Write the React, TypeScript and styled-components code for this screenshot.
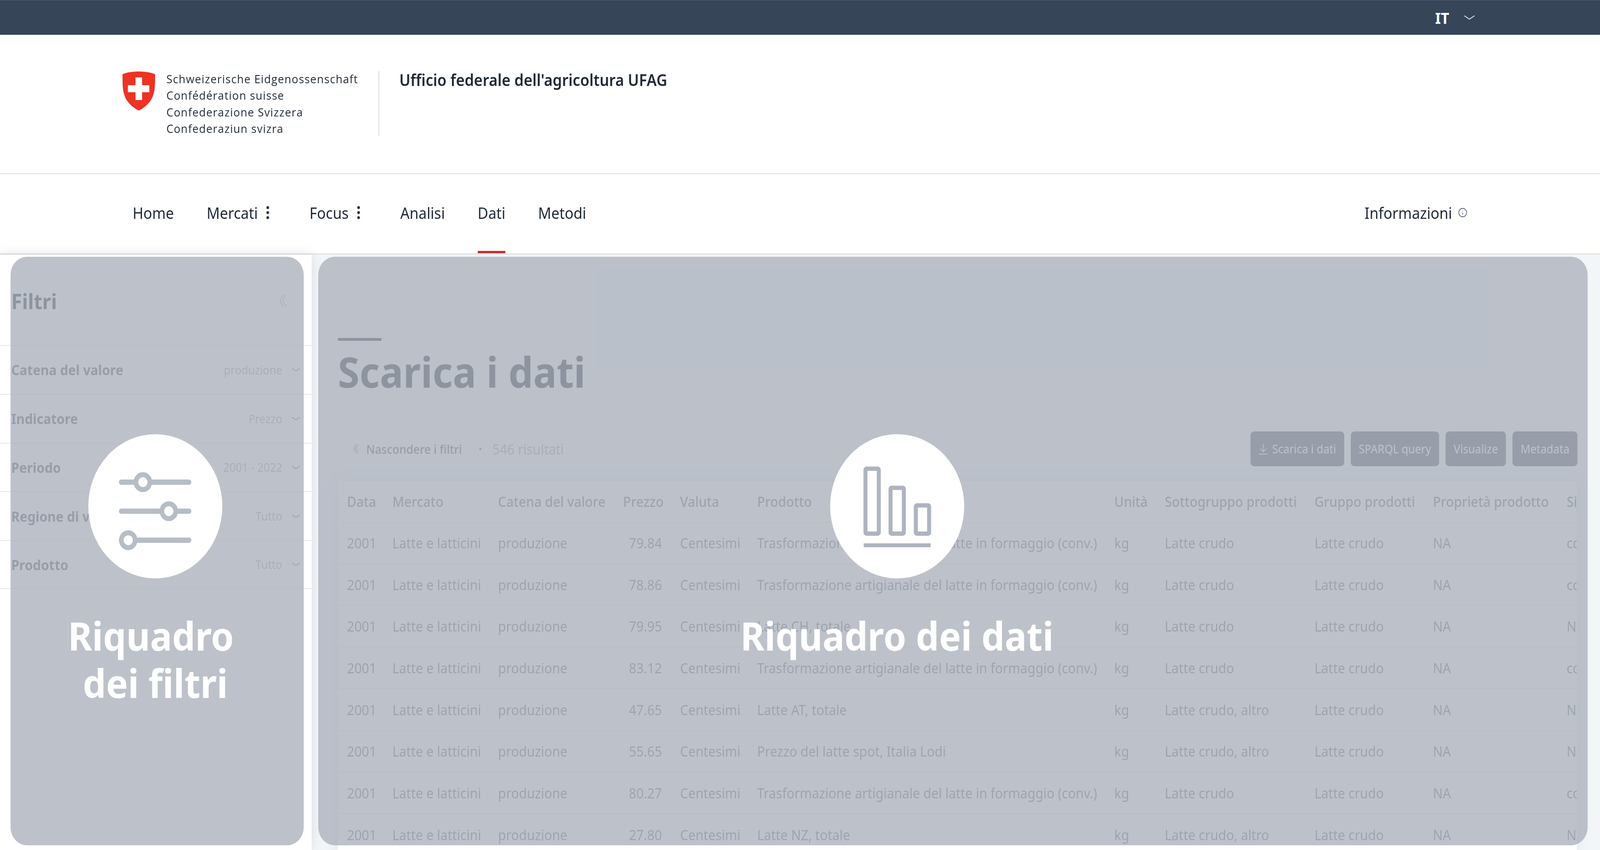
import styled, { createGlobalStyle } from "styled-components";
import { Info, EllipsisVertical } from "lucide-react";

const PAGE_WIDTH = 4404;

const GlobalStyle = createGlobalStyle`
    html, body {
        margin: 0;
        padding: 0;
        background: #fff;
    }
    body {
        font-family: "Noto Sans", sans-serif;
        color: #1f2937;
        overflow: hidden;
    }
`;

const Page = styled.div`
    position: relative;
    width: ${PAGE_WIDTH}px;
    height: 2175px;
    overflow: hidden;
    display: flex;
    flex-direction: column;
    transform-origin: 0 0;
`;

const TopBar = styled.div`
    flex: none;
    height: 89px;
    background: #364558;
    border-top: 1px solid #55657a;
    box-sizing: border-box;
    display: flex;
    align-items: center;
    justify-content: flex-end;
    padding-right: 344px;
    gap: 40px;
`;

const Lang = styled.span`
    color: #fff;
    font-size: 40px;
    font-weight: 700;
`;

const Header = styled.header`
    flex: none;
    height: 357px;
    box-sizing: border-box;
    border-bottom: 3px solid #e5e7eb;
    padding: 93px 0 0 337px;
    display: flex;
    align-items: flex-start;
`;

const Logo = styled.div`
    display: flex;
    align-items: flex-start;
    width: 707px;
    height: 166px;
    box-sizing: border-box;
    border-right: 2px solid #d1d5db;
`;

const Shield = styled.svg`
    flex: none;
    width: 90px;
    height: 101px;
    margin-top: 1px;
`;

const LogoLines = styled.div`
    margin-left: 31px;
    margin-top: -1px;
    font-family: "Open Sans", sans-serif;
    font-size: 30px;
    line-height: 42.3px;
    letter-spacing: 1.5px;
    color: #1f2937;
    white-space: nowrap;
`;

const Office = styled.div`
    margin-left: 55px;
    margin-top: -3px;
    font-size: 41px;
    line-height: 50px;
    font-weight: 600;
    color: #1f2937;
`;

const Nav = styled.nav`
    flex: none;
    height: 206px;
    box-sizing: border-box;
    border-bottom: 4px solid #e5e7eb;
    padding: 0 365px 0 365px;
    display: flex;
    align-items: stretch;
    gap: 90px;
`;

const NavItem = styled.a<{ $active?: boolean }>`
    display: flex;
    align-items: center;
    font-size: 40px;
    color: #1f2937;
    border-bottom: 6px solid ${(p) => (p.$active ? "#c53030" : "transparent")};
    svg {
        margin: 0 3px 0 5px;
    }
`;

const NavRight = styled(NavItem)`
    margin-left: auto;
    gap: 16px;
    svg {
        margin: 0;
    }
`;

const Body = styled.div`
    flex: 1;
    min-height: 0;
    display: flex;
    background: #f3f6f9;
`;

const FilterPanel = styled.aside`
    flex: none;
    width: 858px;
    background: #fff;
    box-shadow: 0 0 30px rgba(31, 41, 55, 0.12);
    position: relative;
    z-index: 1;
`;

const FilterHead = styled.div`
    height: 231px;
    box-sizing: border-box;
    padding: 4px 70px 0 31px;
    display: flex;
    align-items: center;
    justify-content: space-between;
`;

const FilterTitle = styled.h2`
    margin: 0;
    font-size: 54px;
    font-weight: 700;
`;

const FilterRow = styled.div`
    height: 124.8px;
    box-sizing: border-box;
    border-top: 2px solid #e5e7eb;
    padding: 0 32px 0 31px;
    display: flex;
    align-items: center;
    &:last-child {
        border-bottom: 2px solid #e5e7eb;
    }
`;

const FilterLabel = styled.span`
    font-size: 35.5px;
    font-weight: 700;
    color: #4b5563;
`;

const FilterValue = styled.span`
    margin-left: auto;
    margin-right: 26px;
    font-size: 30px;
    color: #9ca3af;
`;

const Main = styled.main`
    flex: 1;
    min-width: 0;
    padding: 213px 64px 0 72px;
`;

const TitleBar = styled.div`
    width: 120px;
    height: 7px;
    background: #1f2937;
`;

const Title = styled.h1`
    margin: 14px 0 0;
    font-size: 108px;
    line-height: 130px;
    font-weight: 700;
`;

const Toolbar = styled.div`
    margin-top: 88px;
    height: 89px;
    padding-left: 41px;
    display: flex;
    align-items: center;
`;

const HideFilters = styled.span`
    margin-left: 20px;
    font-size: 31px;
    font-weight: 500;
    color: #4b5563;
`;

const Dot = styled.span`
    width: 6px;
    height: 6px;
    margin: 0 30px 0 48px;
    border-radius: 50%;
    background: #6b7280;
`;

const Results = styled.span`
    font-size: 35.5px;
    color: #9ca3af;
`;

const Actions = styled.div`
    margin-left: auto;
    margin-right: -2px;
    display: flex;
    gap: 18px;
`;

const ActionButton = styled.button`
    height: 89px;
    padding: 0 22px;
    border: none;
    border-radius: 10px;
    background: #4b5563;
    color: #fff;
    font-family: inherit;
    font-size: 30px;
    display: flex;
    align-items: center;
    gap: 12px;
`;

const TableWrap = styled.div`
    margin-top: 38px;
    background: #fff;
    overflow: hidden;
    box-shadow: 0 0 40px rgba(31, 41, 55, 0.08);
`;

const Table = styled.table`
    table-layout: fixed;
    border-collapse: collapse;
    width: 3410px;
    white-space: nowrap;
    font-size: 35.6px;
    color: #6b7280;
`;

const Th = styled.th<{ $w: number; $right?: boolean }>`
    width: ${(p) => p.$w}px;
    height: 105px;
    box-sizing: border-box;
    padding: ${(p) => (p.$right ? "0 25px" : "0 0 0 25px")};
    font-weight: 500;
    overflow: hidden;
    text-align: ${(p) => (p.$right ? "right" : "left")};
`;

const Tr = styled.tr`
    border-top: 2px solid #e5e7eb;
`;

const Td = styled.td<{ $right?: boolean }>`
    height: 106.6px;
    box-sizing: border-box;
    padding: ${(p) => (p.$right ? "0 25px" : "0 0 0 25px")};
    text-align: ${(p) => (p.$right ? "right" : "left")};
    overflow: hidden;
`;

const Overlay = styled.div<{ $left: number; $width: number; $pad: number }>`
    position: absolute;
    top: 657px;
    left: ${(p) => p.$left}px;
    width: ${(p) => p.$width}px;
    height: 1506px;
    border-radius: 46px;
    background: rgba(171, 178, 188, 0.79);
    display: flex;
    flex-direction: column;
    align-items: center;
    padding: 454px ${(p) => p.$pad}px 0 0;
    box-sizing: border-box;
    z-index: 2;
`;

const Circle = styled.div`
    width: 369px;
    height: 369px;
    flex: none;
    border-radius: 50%;
    background: #fff;
    svg {
        display: block;
    }
`;

const OverlayLabel = styled.div`
    margin-top: 86px;
    color: #fff;
    font-size: 101px;
    line-height: 121px;
    font-weight: 700;
    text-align: center;
`;

const LabelLine = styled.span`
    display: block;
    padding-right: 24px;
`;

const Chevron = ({ w = 23, color = "#9ca3af" }: { w?: number; color?: string }) => (
    <svg width={w} height={w * 0.45} viewBox="0 0 23 10" fill="none" stroke={color} strokeWidth="1.8" style={{ flex: "none" }}>
        <path d="M1 1.5 L11.5 8 L22 1.5" />
    </svg>
);

const DoubleChevron = ({ w = 20, h = 33, color = "#9ca3af" }: { w?: number; h?: number; color?: string }) => (
    <svg width={w} height={h} viewBox="0 0 20 33" fill="none" stroke={color} strokeWidth="1.8" style={{ flex: "none" }}>
        <path d="M11 1 L2 16.5 L11 32" />
        <path d="M19 1 L10 16.5 L19 32" />
    </svg>
);

const DownloadIcon = () => (
    <svg width="26" height="28" viewBox="0 0 26 28" fill="none" stroke="#fff" strokeWidth="1.8">
        <path d="M13 1 V20 M5 13 L13 21 L21 13 M1 27 H25" />
    </svg>
);

const SwissShield = () => (
    <Shield viewBox="0 0 90 101">
        <path
            fill="#ed3324"
            d="M45 0 C62 0 78 2 90 7 C90 32 90 50 82 67 C75 81 60 93 45 100 C30 93 15 81 8 67 C0 50 0 32 0 7 C12 2 28 0 45 0 Z"
        />
        <path fill="#fff" d="M36 15 H54 V35 H74 V53 H54 V73 H36 V53 H15 V35 H36 Z" />
    </Shield>
);

const SlidersIcon = () => (
    <svg width="369" height="369" viewBox="0 0 369 369" fill="#fff" stroke="#b6bdc6" strokeLinecap="round">
        <path strokeWidth="13.5" d="M91 122.7 H277 M91 197 H277 M91 271.3 H277" />
        <circle cx="150.3" cy="122.7" r="19" strokeWidth="12.7" />
        <circle cx="221.7" cy="197" r="19" strokeWidth="12.7" />
        <circle cx="110" cy="271.3" r="19" strokeWidth="12.7" />
    </svg>
);

const BarsIcon = () => (
    <svg width="369" height="369" viewBox="0 0 369 369" fill="none" stroke="#aeb5bf" strokeWidth="11">
        <rect x="97.2" y="88.2" width="36.6" height="166.3" rx="3" />
        <rect x="166.2" y="137.2" width="36.6" height="117.3" rx="3" />
        <rect x="235.8" y="182.2" width="36.6" height="72.3" rx="3" />
        <rect x="92.3" y="279.3" width="184.4" height="10" fill="#aeb5bf" stroke="none" />
    </svg>
);

const columns = [
    { title: "Data", w: 125 },
    { title: "Mercato", w: 291 },
    { title: "Catena del valore", w: 344 },
    { title: "Prezzo", w: 157, right: true },
    { title: "Valuta", w: 212 },
    { title: "Prodotto", w: 983 },
    { title: "Unità", w: 139 },
    { title: "Sottogruppo prodotti", w: 412 },
    { title: "Gruppo prodotti", w: 326 },
    { title: "Proprietà prodotto", w: 368 },
    { title: "Si", w: 53 },
];

const TRASF = "Trasformazione artigianale del latte in formaggio (conv.)";

const rows = [
    ["79.84", TRASF, "Latte crudo", "cc"],
    ["78.86", TRASF, "Latte crudo", "cc"],
    ["79.95", "Latte CH, totale", "Latte crudo", "NA"],
    ["83.12", TRASF, "Latte crudo", "cc"],
    ["47.65", "Latte AT, totale", "Latte crudo, altro", "NA"],
    ["55.65", "Prezzo del latte spot, Italia Lodi", "Latte crudo, altro", "NA"],
    ["80.27", TRASF, "Latte crudo", "cc"],
    ["27.80", "Latte NZ, totale", "Latte crudo, altro", "NA"],
];

const filters = [
    { label: "Catena del valore", value: "produzione" },
    { label: "Indicatore", value: "Prezzo" },
    { label: "Periodo", value: "2001 - 2022" },
    { label: "Regione di vendita", value: "Tutto" },
    { label: "Prodotto", value: "Tutto" },
];

const App = () => {
    // the browser window can be narrower than the page was drawn for
    const fit = window.innerWidth / PAGE_WIDTH;

    return (
        <Page style={{ transform: `scaleX(${fit})` }}>
            <GlobalStyle />

            <TopBar>
                <Lang>IT</Lang>
                <Chevron w={31} color="#d1d5db" />
            </TopBar>

            <Header>
                <Logo>
                    <SwissShield />
                    <LogoLines>
                        Schweizerische Eidgenossenschaft
                        <br />
                        Confédération suisse
                        <br />
                        Confederazione Svizzera
                        <br />
                        Confederaziun svizra
                    </LogoLines>
                </Logo>
                <Office>Ufficio federale dell'agricoltura UFAG</Office>
            </Header>

            <Nav>
                <NavItem>Home</NavItem>
                <NavItem>
                    Mercati
                    <EllipsisVertical size={44} strokeWidth={2} />
                </NavItem>
                <NavItem>
                    Focus
                    <EllipsisVertical size={44} strokeWidth={2} />
                </NavItem>
                <NavItem>Analisi</NavItem>
                <NavItem $active>Dati</NavItem>
                <NavItem>Metodi</NavItem>
                <NavRight>
                    Informazioni
                    <Info size={26} strokeWidth={1.5} color="#4b5563" />
                </NavRight>
            </Nav>

            <Body>
                <FilterPanel>
                    <FilterHead>
                        <FilterTitle>Filtri</FilterTitle>
                        <DoubleChevron />
                    </FilterHead>
                    {filters.map((filter) => (
                        <FilterRow key={filter.label}>
                            <FilterLabel>{filter.label}</FilterLabel>
                            <FilterValue>{filter.value}</FilterValue>
                            <Chevron color="#4b5563" />
                        </FilterRow>
                    ))}
                </FilterPanel>

                <Main>
                    <TitleBar />
                    <Title>Scarica i dati</Title>

                    <Toolbar>
                        <DoubleChevron w={17} h={25} color="#4b5563" />
                        <HideFilters>Nascondere i filtri</HideFilters>
                        <Dot />
                        <Results>546 risultati</Results>
                        <Actions>
                            <ActionButton>
                                <DownloadIcon />
                                Scarica i dati
                            </ActionButton>
                            <ActionButton>SPARQL query</ActionButton>
                            <ActionButton>Visualize</ActionButton>
                            <ActionButton>Metadata</ActionButton>
                        </Actions>
                    </Toolbar>

                    <TableWrap>
                        <Table>
                            <thead>
                                <tr>
                                    {columns.map((col) => (
                                        <Th key={col.title} $w={col.w} $right={col.right}>
                                            {col.title}
                                        </Th>
                                    ))}
                                </tr>
                            </thead>
                            <tbody>
                                {rows.map((row, idx) => (
                                    <Tr key={idx}>
                                        <Td>2001</Td>
                                        <Td>Latte e latticini</Td>
                                        <Td>produzione</Td>
                                        <Td $right>{row[0]}</Td>
                                        <Td>Centesimi</Td>
                                        <Td>{row[1]}</Td>
                                        <Td>kg</Td>
                                        <Td>{row[2]}</Td>
                                        <Td>Latte crudo</Td>
                                        <Td>NA</Td>
                                        <Td>{row[3]}</Td>
                                    </Tr>
                                ))}
                            </tbody>
                        </Table>
                    </TableWrap>
                </Main>
            </Body>

            <Overlay $left={29} $width={807} $pad={10}>
                <Circle>
                    <SlidersIcon />
                </Circle>
                <OverlayLabel>
                    <LabelLine>Riquadro</LabelLine>
                    dei filtri
                </OverlayLabel>
            </Overlay>

            <Overlay $left={876} $width={3494} $pad={308}>
                <Circle>
                    <BarsIcon />
                </Circle>
                <OverlayLabel>Riquadro dei dati</OverlayLabel>
            </Overlay>
        </Page>
    );
};

export default App;
